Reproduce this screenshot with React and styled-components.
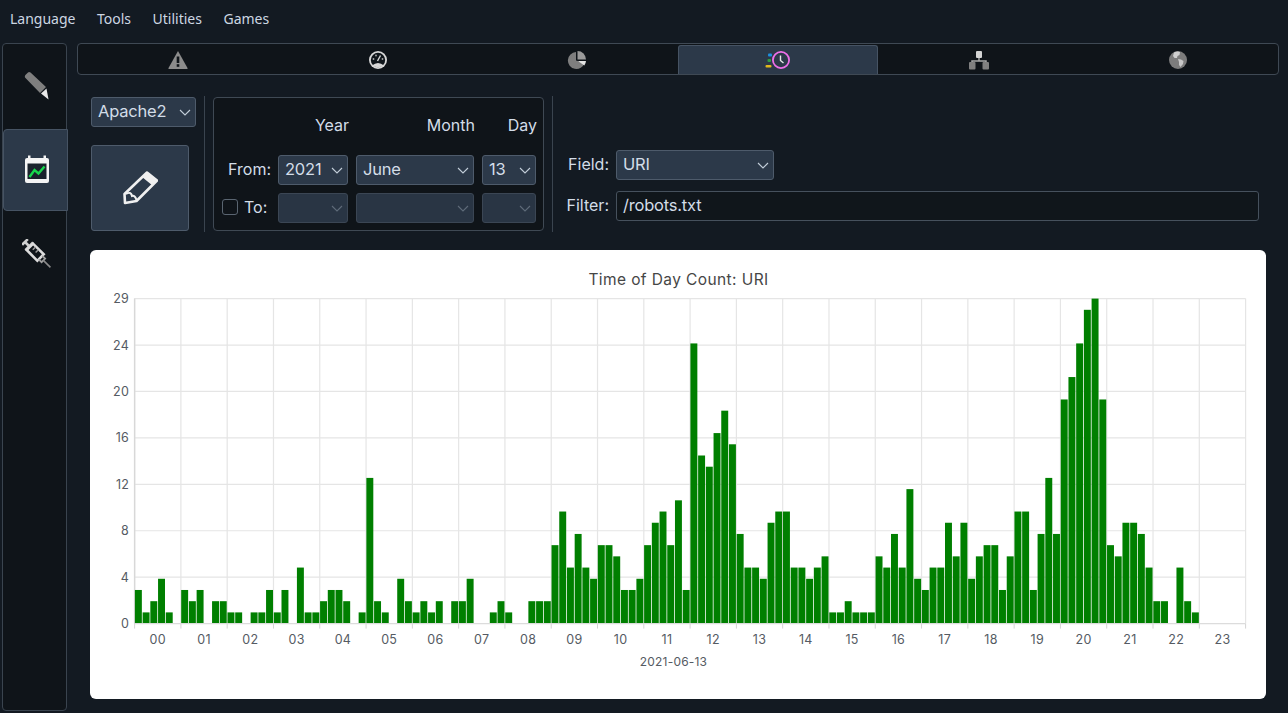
import React from "react";
import styled, { createGlobalStyle } from "styled-components";

const GlobalStyle = createGlobalStyle`
  html, body { margin: 0; padding: 0; background: #131a22; }
  body { font-family: "Inter", "Open Sans", sans-serif; color: #d3dde8; overflow: hidden; }
`;

const Page = styled.div`
  width: 1288px; height: 713px; display: flex; flex-direction: column; background: #131a22;
`;
const MenuBar = styled.nav`
  height: 43px; flex: none; display: flex; align-items: center; gap: 21.5px; padding: 0 0 7px 10px; box-sizing: border-box;
`;
const MenuItem = styled.span`
  font: 14px "Noto Sans", "Open Sans", sans-serif; color: #cdd7e2;
`;
const Body = styled.div`
  flex: none; height: 668px; display: flex; padding-left: 2px; gap: 10px;
`;
const Side = styled.aside`
  width: 65px; box-sizing: border-box; background: #0f1419; border: 1px solid #3a444f; border-radius: 4px;
  display: flex; flex-direction: column;
`;
const SideItem = styled.div`
  width: 65px; height: ${p => p.$h}px; box-sizing: border-box; display: flex; align-items: center; justify-content: center; padding-left: 2px;
  ${p => p.$active ? "background:#2c3949;border:1px solid #465363;border-radius:4px 0 0 4px;padding-bottom:2px;" : ""}
  margin-top: ${p => p.$first ? "-1px" : "0"};
`;
const Main = styled.main`
  flex: 1; min-width: 0; display: flex; flex-direction: column; padding-right: 9px;
`;
const Tabs = styled.div`
  height: 32px; box-sizing: border-box; background: #0f1419; border: 1px solid #3f4954; border-radius: 4px; display: flex; padding-top: 1px;
`;
const Tab = styled.div`
  flex: 1 1 0; margin: 0 1px; box-sizing: border-box; display: flex; align-items: center; justify-content: center; border-radius: 3px 3px 0 0;
  ${p => p.$active ? "background:#2c3949;border:1px solid #465363;border-bottom:none;" : ""}
`;
const Controls = styled.section`
  display: flex; gap: 8px; padding: 21px 0 0 14px; height: 136px; box-sizing: content-box;
`;
const LeftCol = styled.div`
  width: 105px; padding-top: 1px; display: flex; flex-direction: column; gap: 18px; align-items: flex-start;
`;
const Select = styled.div`
  height: 30px; width: 100%; box-sizing: border-box; border-radius: 3px;
  display: flex; align-items: center; justify-content: space-between; padding: 0 4px 2px 6px; font-size: 16.5px;
  background: ${p => p.$off ? "#293544" : "#2c3949"}; border: 1px solid ${p => p.$off ? "#3b4654" : "#4e5b6b"};
  color: #d3dde8; letter-spacing: -0.2px;
  svg { margin-top: 2px; }
`;
const EditButton = styled.button`
  width: 98px; height: 86px; padding: 0; background: #2c3949; border: 1px solid #4e5b6b; border-radius: 3px;
  display: flex; align-items: center; justify-content: center;
`;
const Divider = styled.div`
  width: 1px; height: 136px; background: #3a444f; flex: none;
`;
const DateBox = styled.div`
  margin-top: 1px; width: 331px; height: 134px; box-sizing: border-box; flex: none; background: #0f1419; border: 1px solid #3f4954; border-radius: 4px;
  display: grid; grid-template-columns: 56px 70px 118px 54px; grid-template-rows: 49px 30px 30px; column-gap: 8px; row-gap: 8px;
`;
const Head = styled.div`
  justify-self: end; align-self: center; padding-top: 5px; font-size: 16px; color: #d3dde8; margin-right: -1px; letter-spacing: 0;
`;
const RowLabel = styled.div`
  display: flex; align-items: center; justify-content: ${p => p.$left ? "flex-start" : "flex-end"}; gap: 6px; font-size: 16px; color: #d3dde8;
  letter-spacing: 0; padding: ${p => p.$left ? "0 0 2px 8px" : "0 0 2px 0"}; margin-right: ${p => p.$left ? "-8px" : "-1px"}; white-space: nowrap;
`;
const Check = styled.span`
  width: 16px; height: 16px; box-sizing: border-box; flex: none; border: 1px solid #5a6571; border-radius: 3px; background: #0f1419;
`;
const Filters = styled.div`
  flex: 1; margin-right: 20px; padding-top: 54px; display: grid; grid-template-columns: 48px 158px 1fr; grid-template-rows: 30px 30px; column-gap: 7px; row-gap: 11px;
`;
const FieldLabel = styled.div`
  display: flex; align-items: center; justify-content: flex-end; padding-bottom: 2px; font-size: 16px; color: #d3dde8; letter-spacing: 0; white-space: nowrap;
`;
const FilterInput = styled.div`
  grid-column: 2 / 4; box-sizing: border-box; background: #10161b; border: 1px solid #46515d; border-radius: 3px;
  display: flex; align-items: center; padding: 0 6px 2px; font-size: 16.5px; color: #d3dde8; letter-spacing: -0.2px;
`;
const ChartCard = styled.div`
  margin: 18px 0 0 13px; width: 1176px; height: 449px; background: #fff; border-radius: 6px; overflow: hidden;
`;
const ChartSvg = styled.svg`
  display: block; font-family: "Inter", "Open Sans", sans-serif;
`;

const Chevron = ({ off }) => (
  <svg width="12" height="7" viewBox="0 0 12 7" fill="none" stroke={off ? "#5f6b79" : "#c3ced9"} strokeWidth="1.1">
    <path d="M1 1l5 5 5-5" />
  </svg>
);

const Warn = () => (
  <svg width="20" height="20" viewBox="0 0 20 20">
    <path d="M10 1 L19.5 18 Q20 19 19 19 H1 Q0 19 .5 18 Z" fill="#8c8c8c" />
    <rect x="8.7" y="6.5" width="2.6" height="6.5" fill="#0f1419" />
    <rect x="8.7" y="14.2" width="2.6" height="2.6" fill="#0f1419" />
  </svg>
);
const Gauge = () => (
  <svg width="20" height="20" viewBox="0 0 20 20">
    <circle cx="10" cy="10" r="9" fill="#d8d8d8" />
    <circle cx="10" cy="10" r="7.2" fill="#10161b" />
    <path d="M4 15.5 Q10 10.5 16 15.5 Q10 19 4 15.5Z" fill="#d8d8d8" />
    <path d="M9.5 11 L12.5 5.5" stroke="#d8d8d8" strokeWidth="1.4" />
    <circle cx="5.5" cy="9" r=".9" fill="#aaa" /><circle cx="8" cy="5.5" r=".9" fill="#aaa" /><circle cx="14.5" cy="9" r=".9" fill="#aaa" />
  </svg>
);
const Pie = () => (
  <svg width="20" height="20" viewBox="0 0 20 20">
    <path d="M9 2 A8.5 8.5 0 1 0 17.5 13 L9 10.5Z" fill="#7e7e7e" />
    <path d="M10.5 1 A8.5 8.5 0 0 1 19 9.5 L10.5 9.5Z" fill="#9a9a9a" />
    <path d="M11 11 L19 11 A8.5 8.5 0 0 1 17.3 15.5Z" fill="#e4e4e4" />
  </svg>
);
const ClockTab = () => (
  <svg width="26" height="20" viewBox="0 0 26 20">
    <circle cx="16" cy="10" r="8.1" fill="none" stroke="#ee6fe8" strokeWidth="1.8" />
    <path d="M15.5 5.5 V10.5 L18.5 13" fill="none" stroke="#e8e8e8" strokeWidth="1.4" />
    <rect x="3" y="3.5" width="4" height="3" rx="1" fill="#1c8fe0" />
    <rect x="2.5" y="9" width="3.5" height="3" rx="1" fill="#2f9e44" />
    <rect x="0.5" y="15" width="6" height="2.6" rx="1" fill="#e0b81c" />
  </svg>
);
const Net = () => (
  <svg width="22" height="20" viewBox="0 0 22 20">
    <rect x="8" y="1" width="6" height="7" rx="1" fill="#d4d4d4" />
    <path d="M11 8 V11 M4 14 V11 H18 V14" fill="none" stroke="#a8a8a8" strokeWidth="1.5" />
    <rect x="1" y="12" width="6.5" height="7.5" rx="1" fill="#808080" />
    <rect x="14.5" y="12" width="6.5" height="7.5" rx="1" fill="#808080" />
  </svg>
);
const Globe = () => (
  <svg width="20" height="20" viewBox="0 0 20 20">
    <circle cx="10" cy="10" r="9" fill="#7c7c7c" />
    <path d="M6 2.5 Q9 1 12 2 L11.5 5 L9.5 6 L9 8 L6.5 8 L5 6Z" fill="#d0d0d0" />
    <path d="M10 9 L13 9.5 L15.5 11 L15 14 L12.5 17 L11 15 L11 12Z" fill="#c8c8c8" />
  </svg>
);
const SidePencil = () => (
  <svg width="28" height="32" viewBox="0 0 28 32">
    <path d="M2 7.5 Q1.4 6 2.4 5 L5 2.4 Q6 1.4 7.5 2.4 L23 17 L17 23Z" fill="#7f7f7f" />
    <path d="M18 23.5 L23.5 18.5 L25.5 29.5Z" fill="#e8e8e8" />
  </svg>
);
const SideCalendar = () => (
  <svg width="26" height="29" viewBox="0 0 26 29">
    <rect x="1" y="3" width="24" height="25" rx="2" fill="#f4f4f4" />
    <rect x="4" y="0.5" width="2.5" height="4" fill="#f4f4f4" /><rect x="19.5" y="0.5" width="2.5" height="4" fill="#f4f4f4" />
    <rect x="3.5" y="8.5" width="19" height="15.5" fill="#1a222c" />
    <path d="M5.5 22 L10.5 15 L14.5 18.5 L20.5 11.5" fill="none" stroke="#17d64c" strokeWidth="2.4" />
  </svg>
);
const SideSyringe = () => (
  <svg width="30" height="30" viewBox="0 0 30 30">
    <g transform="rotate(45 15 15)" fill="none" stroke="#d0d0d0">
      <path d="M-2 11 V19 M-2 15 H4" strokeWidth="2.6" />
      <path d="M4 9.5 V20.5" strokeWidth="2.6" />
      <rect x="5" y="10.5" width="15" height="9" strokeWidth="2.6" stroke="#dcdcdc" />
      <path d="M9 11 V15 M13 11 V15" strokeWidth="1.5" stroke="#9a9a9a" />
      <path d="M20 12.5 H24 V17.5 H20" strokeWidth="1.8" stroke="#a0a0a0" />
      <path d="M24 15 H34" strokeWidth="1.6" stroke="#8a8a8a" />
    </g>
  </svg>
);
const EditIcon = () => (
  <svg width="36" height="36" viewBox="0 0 36 36">
    <path d="M25 2.5 L35 10.5 L14.5 31 L3 33 L2.5 24Z" fill="none" stroke="#f0f0f0" strokeWidth="2.6" strokeLinejoin="round" />
    <path d="M25 2.5 L35 10.5 L30.5 15.5 L20 7Z" fill="#f0f0f0" />
    <path d="M4 24 Q9 21 10 26 Q13 25 14.5 30" fill="none" stroke="#f0f0f0" strokeWidth="2" />
  </svg>
);

const DATA = [
  3,1,2,4,1,0, 3,2,3,0,2,2, 1,1,0,1,1,3, 1,3,0,5,1,1, 2,3,3,2,0,1, 13,2,1,0,4,2,
  1,2,1,2,0,2, 2,4,0,0,1,2, 1,0,0,2,2,2, 7,10,5,8,5,4, 7,7,6,3,3,4, 7,9,10,7,11,3,
  25,15,14,17,19,16, 8,5,5,4,9,10, 10,5,5,4,5,6, 1,1,2,1,1,1, 6,5,8,5,12,4,
  3,5,5,9,6,9, 4,6,7,7,3,6, 10,10,3,8,13,8, 20,22,25,28,29,20, 7,6,9,9,8,5,
  2,2,0,5,2,1, 0,0,0,0,0,0
];
const L = 134.6, R = 1245.6, T = 298.6, B = 623.6;
const HOUR = (R - L) / 24, BAR = HOUR / 6, UNIT = (B - T) / 29, YSTEP = (B - T) / 7;
const YLABELS = ["0", "4", "8", "12", "16", "20", "24", "29"];

const Chart = () => (
  <ChartSvg width="1176" height="449" viewBox="90 250 1176 449">
    <text x="678.5" y="284.5" textAnchor="middle" fontSize="15.5" fill="#464646" letterSpacing="0.4">Time of Day Count: URI</text>
    {YLABELS.map((t, i) => {
      const y = B - i * YSTEP;
      return (
        <g key={t}>
          {i > 0 && <line x1={L} x2={R} y1={y} y2={y} stroke="#e5e5e5" strokeWidth="1.2" />}
          <text x="129" y={y + 4.5} textAnchor="end" fontSize="12.5" fill="#555b63" letterSpacing="0.2">{t}</text>
        </g>
      );
    })}
    {Array.from({ length: 25 }, (_, i) => (
      <g key={i}>
        <line x1={L + i * HOUR} x2={L + i * HOUR} y1={T} y2={B} stroke="#e5e5e5" strokeWidth="1.2" />
        <line x1={L + i * HOUR} x2={L + i * HOUR} y1={B} y2={B + 5} stroke="#d4d4d4" />
      </g>
    ))}
    <line x1={L} x2={L} y1={T} y2={B} stroke="#d8d8d8" strokeWidth="1.4" />
    {DATA.map((v, i) => v > 0 && (
      <rect key={i} x={L + 0.3 + i * BAR} y={B - v * UNIT} width={6.95} height={v * UNIT} fill="#007f00" />
    ))}
    <line x1={L} x2={R} y1={B} y2={B} stroke="#dcdcdc" strokeWidth="1.4" />
    {Array.from({ length: 24 }, (_, i) => (
      <text key={i} x={L + (i + 0.5) * HOUR} y="643.5" textAnchor="middle" fontSize="12.5" fill="#555b63" letterSpacing="0.3">
        {String(i).padStart(2, "0")}
      </text>
    ))}
    <text x="673.5" y="666" textAnchor="middle" fontSize="12" fill="#555b63" letterSpacing="0.2">2021-06-13</text>
  </ChartSvg>
);

export default function App() {
  return (
    <Page>
      <GlobalStyle />
      <MenuBar>
        <MenuItem>Language</MenuItem>
        <MenuItem>Tools</MenuItem>
        <MenuItem>Utilities</MenuItem>
        <MenuItem>Games</MenuItem>
      </MenuBar>
      <Body>
        <Side>
          <SideItem $h={86} $first><SidePencil /></SideItem>
          <SideItem $h={82} $active><SideCalendar /></SideItem>
          <SideItem $h={86}><SideSyringe /></SideItem>
        </Side>
        <Main>
          <Tabs>
            <Tab><Warn /></Tab>
            <Tab><Gauge /></Tab>
            <Tab><Pie /></Tab>
            <Tab $active><ClockTab /></Tab>
            <Tab><Net /></Tab>
            <Tab><Globe /></Tab>
          </Tabs>
          <Controls>
            <LeftCol>
              <Select>Apache2 <Chevron /></Select>
              <EditButton><EditIcon /></EditButton>
            </LeftCol>
            <Divider />
            <DateBox>
              <span />
              <Head>Year</Head>
              <Head>Month</Head>
              <Head>Day</Head>
              <RowLabel>From:</RowLabel>
              <Select>2021 <Chevron /></Select>
              <Select>June <Chevron /></Select>
              <Select>13 <Chevron /></Select>
              <RowLabel $left><Check />To:</RowLabel>
              <Select $off><span /><Chevron off /></Select>
              <Select $off><span /><Chevron off /></Select>
              <Select $off><span /><Chevron off /></Select>
            </DateBox>
            <Divider />
            <Filters>
              <FieldLabel>Field:</FieldLabel>
              <Select>URI <Chevron /></Select>
              <span />
              <FieldLabel>Filter:</FieldLabel>
              <FilterInput>/robots.txt</FilterInput>
            </Filters>
          </Controls>
          <ChartCard><Chart /></ChartCard>
        </Main>
      </Body>
    </Page>
  );
}
